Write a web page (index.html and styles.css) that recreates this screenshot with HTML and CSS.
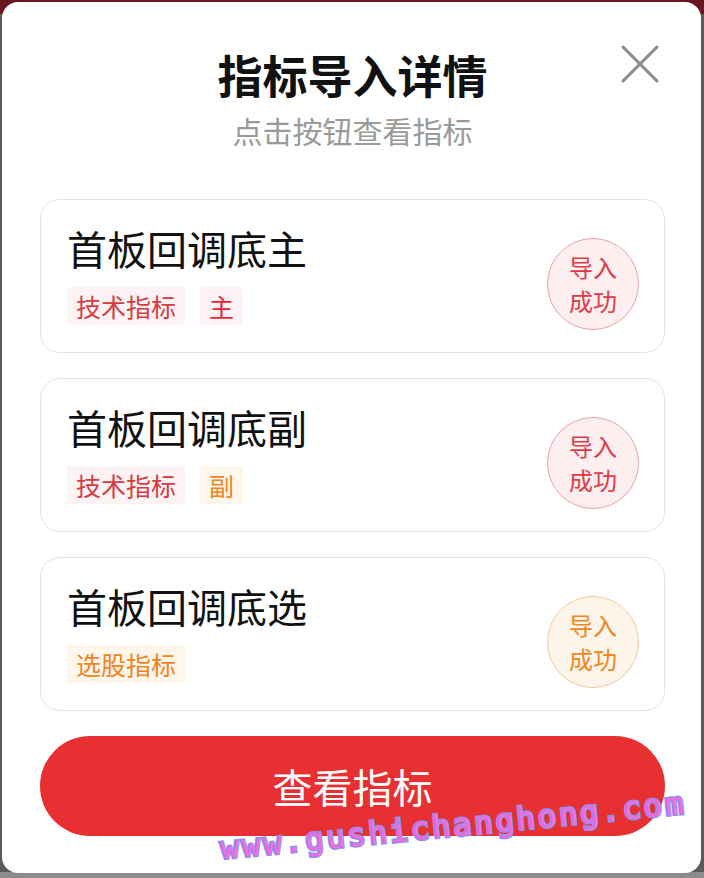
FILE: index.html
```html
<!DOCTYPE html>
<html lang="zh">
<head>
<meta charset="utf-8">
<title>指标导入详情</title>
<link rel="stylesheet" href="styles.css">
</head>
<body>
<div class="modal">
  <button class="close" aria-label="关闭">
    <svg width="40" height="40" viewBox="0 0 40 40"><path d="M3 3 L37 37 M37 3 L3 37" stroke="#8a8a8a" stroke-width="3" stroke-linecap="round" fill="none"/></svg>
  </button>
  <div class="header">
    <h1 class="title">指标导入详情</h1>
    <p class="subtitle">点击按钮查看指标</p>
  </div>
  <div class="list">
    <div class="card">
      <div class="info">
        <div class="name">首板回调底主</div>
        <div class="tags">
          <span class="tag red">技术指标</span>
          <span class="tag red bright">主</span>
        </div>
      </div>
      <div class="badge red"><span>导入</span><span>成功</span></div>
    </div>
    <div class="card">
      <div class="info">
        <div class="name">首板回调底副</div>
        <div class="tags">
          <span class="tag red">技术指标</span>
          <span class="tag orange">副</span>
        </div>
      </div>
      <div class="badge red"><span>导入</span><span>成功</span></div>
    </div>
    <div class="card">
      <div class="info">
        <div class="name">首板回调底选</div>
        <div class="tags">
          <span class="tag orange">选股指标</span>
        </div>
      </div>
      <div class="badge orange"><span>导入</span><span>成功</span></div>
    </div>
  </div>
  <button class="primary">查看指标</button>
  <div class="watermark">www.gushichanghong.com</div>
</div>
</body>
</html>
```
FILE: styles.css
```css
html, body {
  margin: 0;
  padding: 0;
}
body {
  width: 704px;
  height: 878px;
  overflow: hidden;
  background: linear-gradient(#6a1523 0, #6a1523 14px, #5b5b5b 14px, #5b5b5b 872px, #8c8c8c 872px);
  font-family: "Noto Sans CJK SC", "Noto Sans", sans-serif;
}
.modal {
  position: relative;
  box-sizing: border-box;
  margin: 2px 3px 0 2px;
  height: 871px;
  background: #fff;
  border-radius: 16px;
  padding: 45px 36px 0 38px;
  overflow: hidden;
}
.close {
  position: absolute;
  top: 42px;
  right: 41px;
  width: 40px;
  height: 40px;
  padding: 0;
  border: 0;
  background: none;
}
.close svg { display: block; }
.header {
  text-align: center;
}
.title {
  margin: 0;
  font-size: 45px;
  line-height: 56px;
  font-weight: 700;
  color: #111;
}
.subtitle {
  margin: 7px 0 0;
  font-size: 30px;
  line-height: 40px;
  color: #9a9a9a;
}
.list {
  margin-top: 49px;
  display: flex;
  flex-direction: column;
  gap: 25px;
}
.card {
  box-sizing: border-box;
  height: 154px;
  border: 1px solid #e4e4e4;
  border-radius: 20px;
  padding: 23px 25px 0 26px;
  display: flex;
  align-items: flex-start;
  justify-content: space-between;
}
.name {
  font-size: 40px;
  line-height: 50px;
  color: #111;
}
.tags {
  margin-top: 14px;
  display: flex;
  gap: 15px;
}
.tag {
  height: 38px;
  line-height: 38px;
  padding: 0 9px;
  font-size: 25px;
  border-radius: 3px;
}
.tag.red {
  color: #d83a42;
  background: #fdf3f4;
}
.tag.red.bright {
  color: #ec2231;
}
.tag.orange {
  color: #f0841c;
  background: #fff6ec;
}
.badge {
  box-sizing: border-box;
  margin-top: 15px;
  width: 92px;
  height: 92px;
  border-radius: 50%;
  display: flex;
  flex-direction: column;
  align-items: center;
  justify-content: center;
  font-size: 24px;
  line-height: 34px;
}
.badge.red {
  color: #e03a48;
  background: #fdeef0;
  border: 1px solid #e9a3ad;
}
.badge.orange {
  color: #f0851e;
  background: #fef5ea;
  border: 1px solid #f2c99c;
}
.primary {
  display: block;
  margin-top: 25px;
  width: 625px;
  height: 100px;
  border: 0;
  border-radius: 50px;
  background: #e83033;
  color: #fff;
  font-family: "Noto Sans CJK SC", "Noto Sans", sans-serif;
  font-size: 40px;
}
.watermark {
  position: absolute;
  left: 220px;
  top: 828px;
  font-family: "DejaVu Sans Mono", monospace;
  font-weight: 400;
  font-size: 31px;
  letter-spacing: 2.6px;
  color: #f46ad8;
  -webkit-text-stroke: 3px #8f90f6;
  paint-order: stroke fill;
  transform: rotate(-5.6deg);
  transform-origin: left bottom;
  white-space: nowrap;
}
```
